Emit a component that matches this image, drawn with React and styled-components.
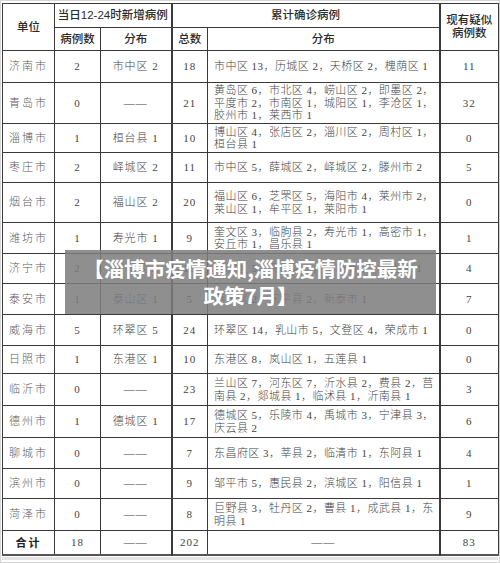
import React from 'react';
import styled, { createGlobalStyle } from 'styled-components';

const GlobalStyle = createGlobalStyle`
  html, body { margin: 0; padding: 0; background: #fff; }
  body { width: 500px; height: 563px; overflow: hidden; }
`;

const rows = [
  { city: '济南市', n: '2', dist: '市中区 2', total: '18', acc: ['市中区 13，历城区 2，天桥区 2，槐荫区 1'], sus: '11', h: 32 },
  { city: '青岛市', n: '0', dist: '——', total: '21', acc: ['黄岛区 6，市北区 4，崂山区 2，即墨区 2，', '平度市 2，市南区 1，城阳区 1，李沧区 1，', '胶州市 1，莱西市 1'], sus: '32', h: 41 },
  { city: '淄博市', n: '1', dist: '桓台县 1', total: '10', acc: ['博山区 4，张店区 2，淄川区 2，周村区 1，', '桓台县 1'], sus: '0', h: 29 },
  { city: '枣庄市', n: '2', dist: '峄城区 2', total: '11', acc: ['市中区 5，薛城区 2，峄城区 2，滕州市 2'], sus: '5', h: 30 },
  { city: '烟台市', n: '2', dist: '福山区 2', total: '20', acc: ['福山区 6，芝罘区 5，海阳市 4，莱州市 2，', '莱山区 1，牟平区 1，莱阳市 1'], sus: '0', h: 40 },
  { city: '潍坊市', n: '1', dist: '寿光市 1', total: '9', acc: ['奎文区 3，临朐县 2，寿光市 1，高密市 1，', '安丘市 1，昌乐县 1'], sus: '1', h: 31 },
  { city: '济宁市', n: '2', dist: '任城区 2', total: '10', acc: ['任城区 5，兖州区 2，邹城市 2，汶上县 1'], sus: '4', h: 30 },
  { city: '泰安市', n: '1', dist: '泰山区 1', total: '5', acc: ['泰山区 2，东平县 2，新泰市 1'], sus: '7', h: 31 },
  { city: '威海市', n: '5', dist: '环翠区 5', total: '24', acc: ['环翠区 14，乳山市 5，文登区 4，荣成市 1'], sus: '0', h: 31 },
  { city: '日照市', n: '1', dist: '东港区 1', total: '10', acc: ['东港区 8，岚山区 1，五莲县 1'], sus: '0', h: 28 },
  { city: '临沂市', n: '0', dist: '——', total: '23', acc: ['兰山区 7，河东区 7，沂水县 2，费县 2，莒', '南县 2，郯城县 1，临沭县 1，沂南县 1'], sus: '3', h: 32 },
  { city: '德州市', n: '1', dist: '德城区 1', total: '17', acc: ['德城区 5，乐陵市 4，禹城市 3，宁津县 3，', '庆云县 2'], sus: '6', h: 32 },
  { city: '聊城市', n: '0', dist: '——', total: '7', acc: ['东昌府区 3，莘县 2，临清市 1，东阿县 1'], sus: '4', h: 31 },
  { city: '滨州市', n: '0', dist: '——', total: '9', acc: ['邹平市 5，惠民县 2，滨城区 1，阳信县 1'], sus: '1', h: 30 },
  { city: '菏泽市', n: '0', dist: '——', total: '8', acc: ['巨野县 3，牡丹区 2，曹县 1，成武县 1，东', '明县 1'], sus: '9', h: 32 },
];

const Frame = styled.div`
  position: relative;
  box-sizing: border-box;
  width: 500px;
  height: 563px;
  padding: 2px 1px 0 1px;
  border: 1px solid #d6d6d6;
  background: #fff;
`;

const Table = styled.table`
  width: 496px;
  table-layout: fixed;
  border-collapse: collapse;
  border-bottom: 2px solid #555;
`;

// td/th height excludes the shared 1px border, so subtract it here
const HeadCell = styled.th`
  height: ${p => p.$h - 1}px;
  padding: 0;
  border: 1px solid #3a3a3a;
  border-left-width: ${p => (p.$thick ? 2 : 1)}px;
  font-family: "Liberation Sans", "Noto Sans CJK SC", sans-serif;
  font-size: 11.5px;
  font-weight: 500;
  line-height: 13px;
  color: #2a2a2a;
  text-align: center;
  vertical-align: middle;
`;

const Cell = styled.td`
  height: ${p => p.$h - 1}px;
  padding: ${p => (p.$left ? '0 0 0 6px' : '0')};
  border: 1px solid #3a3a3a;
  border-left-width: ${p => (p.$thick ? 2 : 1)}px;
  font-family: "Liberation Serif", "Noto Sans CJK SC", serif;
  font-size: 11px;
  font-weight: 300;
  line-height: 12.5px;
  letter-spacing: ${p => (p.$left ? '0.45px' : '1px')};
  color: #444;
  text-align: ${p => (p.$left ? 'left' : 'center')};
  vertical-align: middle;
  white-space: nowrap;
  overflow: hidden;
`;

const CityCell = styled(Cell)`
  letter-spacing: 2px;
  font-weight: ${p => (p.$bold ? 700 : 300)};
  font-family: ${p => (p.$bold ? '"Noto Sans CJK SC", sans-serif' : '"Liberation Serif", "Noto Sans CJK SC", serif')};
  color: ${p => (p.$bold ? '#222' : '#5a5a5a')};
`;

const Line = styled.div``;

const Overlay = styled.div`
  position: absolute;
  left: 64px;
  top: 249px;
  width: 371px;
  height: 64px;
  box-sizing: border-box;
  padding: 5px 0;
  background: rgba(125, 125, 125, 0.86);
  color: #fff;
  font-family: "Noto Sans CJK SC", sans-serif;
  font-size: 20.5px;
  font-weight: 700;
  line-height: 27px;
  text-align: center;
  white-space: nowrap;
`;

const BottomStrip = styled.div`
  height: 3px;
  margin-top: 1px;
  background: #e4e4e4;
`;

export default function App() {
  return (
    <>
      <GlobalStyle />
      <Frame>
        <Table>
          <colgroup>
            <col style={{ width: 52 }} />
            <col style={{ width: 46 }} />
            <col style={{ width: 71 }} />
            <col style={{ width: 36 }} />
            <col style={{ width: 232 }} />
            <col style={{ width: 59 }} />
          </colgroup>
          <thead>
            <tr>
              <HeadCell $h={24} rowSpan={2}>单位</HeadCell>
              <HeadCell $h={24} colSpan={2}>当日12-24时新增病例</HeadCell>
              <HeadCell $h={24} colSpan={2} $thick>累计确诊病例</HeadCell>
              <HeadCell $h={24} rowSpan={2} $thick>现有疑似<br />病例数</HeadCell>
            </tr>
            <tr>
              <HeadCell $h={23}>病例数</HeadCell>
              <HeadCell $h={23}>分布</HeadCell>
              <HeadCell $h={23} $thick>总数</HeadCell>
              <HeadCell $h={23}>分布</HeadCell>
            </tr>
          </thead>
          <tbody>
            {rows.map(r => (
              <tr key={r.city}>
                <CityCell $h={r.h}>{r.city}</CityCell>
                <Cell $h={r.h}>{r.n}</Cell>
                <Cell $h={r.h}>{r.dist}</Cell>
                <Cell $h={r.h} $thick>{r.total}</Cell>
                <Cell $h={r.h} $left>
                  {r.acc.map(l => <Line key={l}>{l}</Line>)}
                </Cell>
                <Cell $h={r.h} $thick>{r.sus}</Cell>
              </tr>
            ))}
            <tr>
              <CityCell $h={24} $bold>合计</CityCell>
              <Cell $h={24}>18</Cell>
              <Cell $h={24}>——</Cell>
              <Cell $h={24} $thick>202</Cell>
              <Cell $h={24}>——</Cell>
              <Cell $h={24} $thick>83</Cell>
            </tr>
          </tbody>
        </Table>
        <BottomStrip />
        <Overlay>
          【淄博市疫情通知,淄博疫情防控最新<br />政策7月】
        </Overlay>
      </Frame>
    </>
  );
}
